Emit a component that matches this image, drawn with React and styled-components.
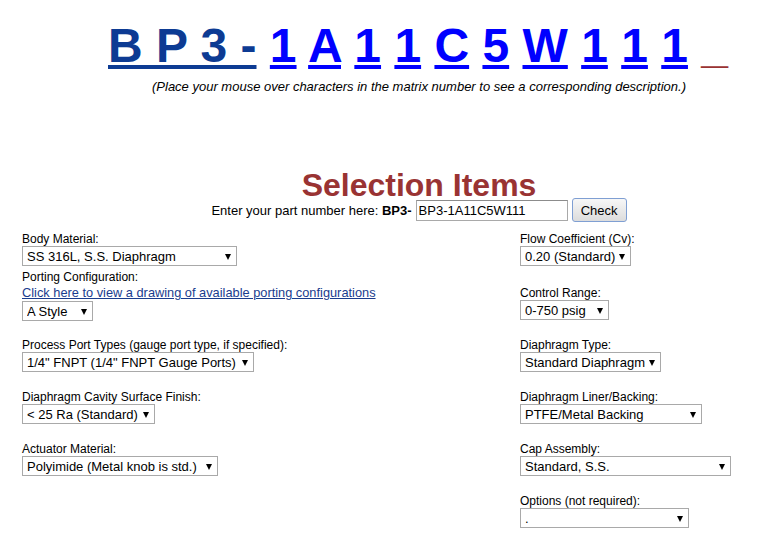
import React from 'react';
import styled, { createGlobalStyle } from 'styled-components';

const GlobalStyle = createGlobalStyle`
  body {
    margin: 0;
    background: #fff;
    overflow: hidden;
    font-family: "Liberation Sans", Arial, sans-serif;
    color: #000;
  }
`;

const Page = styled.div`
  width: 769px;
`;

// centred block: its axis sits at x = 419, like the original wider table
const Header = styled.div`
  padding-left: 69px;
`;

const Title = styled.div`
  margin: 18px 0 0 39px;
  font-size: 48px;
  font-weight: bold;
  line-height: 56px;
  white-space: pre;
`;

const CodeLink = styled.a`
  color: ${(p) => (p.$prefix ? '#0d3b93' : '#0000ff')};
  text-decoration: underline;
  cursor: pointer;
`;

const Blank = styled.span`
  color: #993333;
`;

const Caption = styled.div`
  margin-top: 5px;
  text-align: center;
  font-size: 13px;
  font-style: italic;
  line-height: 15px;
`;

const Heading = styled.div`
  margin-top: 78px;
  text-align: center;
  font-size: 32px;
  font-weight: bold;
  line-height: 26px;
  color: #993333;
`;

const EnterRow = styled.div`
  display: flex;
  justify-content: center;
  align-items: center;
  gap: 4px;
  height: 24px;
  font-size: 13px;
`;

const PartInput = styled.input`
  width: 152px;
  height: 21px;
  box-sizing: border-box;
  border: 1px solid #a9a9a9;
  border-top-color: #8c8c8c;
  padding: 0 2px;
  font-family: inherit;
  font-size: 13px;
  outline: none;
`;

const CheckButton = styled.button`
  width: 55px;
  height: 24px;
  box-sizing: border-box;
  border: 1px solid #7f9fd3;
  border-radius: 3px;
  background: linear-gradient(#f7f7f7, #dcdcdc);
  font-family: inherit;
  font-size: 13px;
  color: #000;
  padding: 0;
`;

const Form = styled.div`
  display: grid;
  grid-template-columns: 498px 1fr;
  margin-top: 10px;
  padding-left: 22px;
`;

const Column = styled.div`
  display: flex;
  flex-direction: column;
  align-items: flex-start;
`;

const Field = styled.div`
  display: flex;
  flex-direction: column;
  align-items: flex-start;
  margin-bottom: ${(p) => p.$after ?? 18}px;
`;

const Label = styled.label`
  font-size: 12px;
  line-height: 14px;
`;

const DrawingLink = styled.a`
  font-size: 12.8px;
  line-height: 16px;
  margin-top: 1px;
  color: #1a3c8e;
  text-decoration: underline;
`;

const SelectBox = styled.div`
  position: relative;
  width: ${(p) => p.$width}px;
  height: 20px;

  &::after {
    content: '';
    position: absolute;
    right: 6px;
    top: 8px;
    border-left: 3.5px solid transparent;
    border-right: 3.5px solid transparent;
    border-top: 6px solid #000;
    pointer-events: none;
  }
`;

const Select = styled.select`
  appearance: none;
  width: 100%;
  height: 100%;
  box-sizing: border-box;
  border: 1px solid #a9a9a9;
  border-radius: 0;
  background: #fff;
  padding: 0 0 0 4px;
  font-family: inherit;
  font-size: 13px;
  color: #000;
  outline: none;
`;

const Dropdown = ({ width, value }) => (
  <SelectBox $width={width}>
    <Select defaultValue={value}>
      <option>{value}</option>
    </Select>
  </SelectBox>
);

const codeChars = ['1', 'A', '1', '1', 'C', '5', 'W', '1', '1', '1'];

const left = [
  { label: 'Process Port Types (gauge port type, if specified):', value: '1/4" FNPT (1/4" FNPT Gauge Ports)', width: 232 },
  { label: 'Diaphragm Cavity Surface Finish:', value: '< 25 Ra (Standard)', width: 133 },
  { label: 'Actuator Material:', value: 'Polyimide (Metal knob is std.)', width: 196 },
];

const right = [
  { label: 'Flow Coefficient (Cv):', value: '0.20 (Standard)', width: 111, after: 20 },
  { label: 'Control Range:', value: '0-750 psig', width: 89 },
  { label: 'Diaphragm Type:', value: 'Standard Diaphragm', width: 141 },
  { label: 'Diaphragm Liner/Backing:', value: 'PTFE/Metal Backing', width: 182 },
  { label: 'Cap Assembly:', value: 'Standard, S.S.', width: 211 },
  { label: 'Options (not required):', value: '.', width: 169 },
];

export default function App() {
  return (
    <Page>
      <GlobalStyle />
      <Header>
        <Title>
          <CodeLink $prefix>B P 3 -</CodeLink>
          {codeChars.map((c, i) => (
            <React.Fragment key={i}>
              {' '}
              <CodeLink>{c}</CodeLink>
            </React.Fragment>
          ))}
          {' '}
          <Blank>_</Blank>
        </Title>
        <Caption>
          (Place your mouse over characters in the matrix number to see a corresponding description.)
        </Caption>

        <Heading>Selection Items</Heading>
        <EnterRow>
          <span>
            Enter your part number here: <b>BP3-</b>
          </span>
          <PartInput defaultValue="BP3-1A11C5W111" />
          <CheckButton>Check</CheckButton>
        </EnterRow>
      </Header>

      <Form>
        <Column>
          <Field $after={4}>
            <Label>Body Material:</Label>
            <Dropdown width={215} value="SS 316L, S.S. Diaphragm" />
          </Field>
          <Field $after={17}>
            <Label>Porting Configuration:</Label>
            <DrawingLink>Click here to view a drawing of available porting configurations</DrawingLink>
            <Dropdown width={71} value="A Style" />
          </Field>
          {left.map((f) => (
            <Field key={f.label}>
              <Label>{f.label}</Label>
              <Dropdown width={f.width} value={f.value} />
            </Field>
          ))}
        </Column>
        <Column>
          {right.map((f) => (
            <Field key={f.label} $after={f.after}>
              <Label>{f.label}</Label>
              <Dropdown width={f.width} value={f.value} />
            </Field>
          ))}
        </Column>
      </Form>
    </Page>
  );
}
